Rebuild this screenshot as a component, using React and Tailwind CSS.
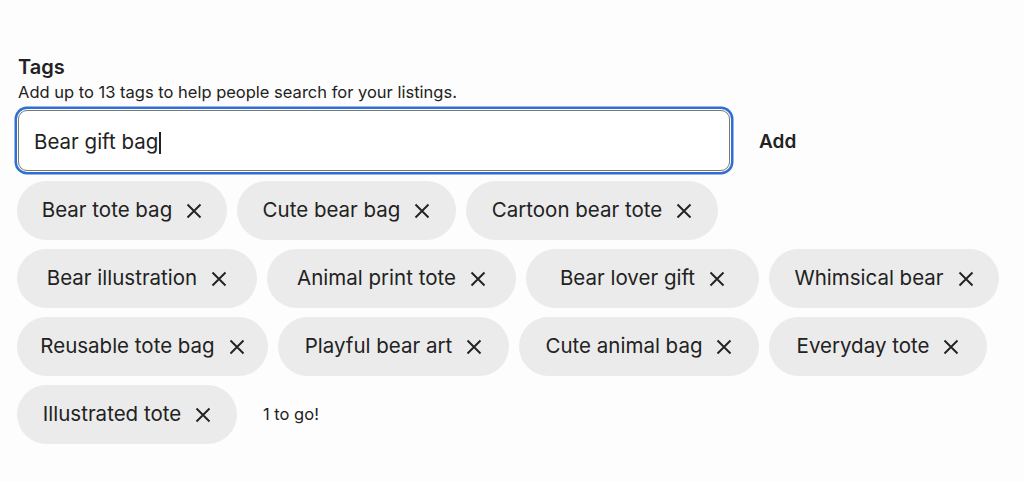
import React from 'react';

const rows = [
  [
    { label: 'Bear tote bag', w: 'w-[210px]' },
    { label: 'Cute bear bag', w: 'w-[219px]' },
    { label: 'Cartoon bear tote', w: 'w-[252px]' },
  ],
  [
    { label: 'Bear illustration', w: 'w-[240px]' },
    { label: 'Animal print tote', w: 'w-[249px]' },
    { label: 'Bear lover gift', w: 'w-[233px]' },
    { label: 'Whimsical bear', w: 'w-[230px]' },
  ],
  [
    { label: 'Reusable tote bag', w: 'w-[251px]' },
    { label: 'Playful bear art', w: 'w-[231px]' },
    { label: 'Cute animal bag', w: 'w-[240px]' },
    { label: 'Everyday tote', w: 'w-[218px]' },
  ],
  [{ label: 'Illustrated tote', w: 'w-[220px]' }],
];

const CloseIcon = () => (
  <svg width="16" height="16" viewBox="0 0 16 16" fill="none" stroke="#222" strokeWidth="1.9">
    <path d="M1.5 1.5 L14.5 14.5 M14.5 1.5 L1.5 14.5" />
  </svg>
);

const Tag = ({ label, w }) => (
  <div className={`${w} flex items-center justify-center gap-[14px] h-[59px] rounded-full bg-[#ebebeb] text-[20.5px] text-[#222]`}>
    <span>{label}</span>
    <CloseIcon />
  </div>
);

export default function App() {
  return (
    <div
      className="w-[1024px] h-[482px] bg-[#fdfdfd] pl-[17px] pt-[55px] text-[#222]"
      style={{ fontFamily: 'Inter, "Noto Sans", sans-serif' }}
    >
      <h2 className="pl-[1px] text-[20px] font-semibold leading-[24px]">Tags</h2>
      <p className="pl-[1px] mt-[3px] text-[16.5px] leading-[20px]">Add up to 13 tags to help people search for your listings.</p>

      <div className="flex items-center mt-[8px]">
        <div className="ml-[1px] w-[712px] h-[61px] rounded-[9px] border border-[#777] bg-white ring-[2.5px] ring-[#2f6fd1] ring-offset-1 flex items-center pl-[15px] pt-[4px] text-[20.5px]">
          Bear gift bag<span className="ml-[1px] w-[1.5px] h-[22px] bg-[#222]" />
        </div>
        <button className="ml-[29px] pt-[3px] text-[19px] font-semibold">Add</button>
      </div>

      <div className="mt-[10px] flex flex-col gap-[9px]">
        {rows.map((row, i) => (
          <div key={i} className="flex items-center gap-[10px]">
            {row.map((t) => (
              <Tag key={t.label} label={t.label} w={t.w} />
            ))}
            {i === rows.length - 1 && <span className="ml-[16px] text-[16.5px]">1 to go!</span>}
          </div>
        ))}
      </div>
    </div>
  );
}
